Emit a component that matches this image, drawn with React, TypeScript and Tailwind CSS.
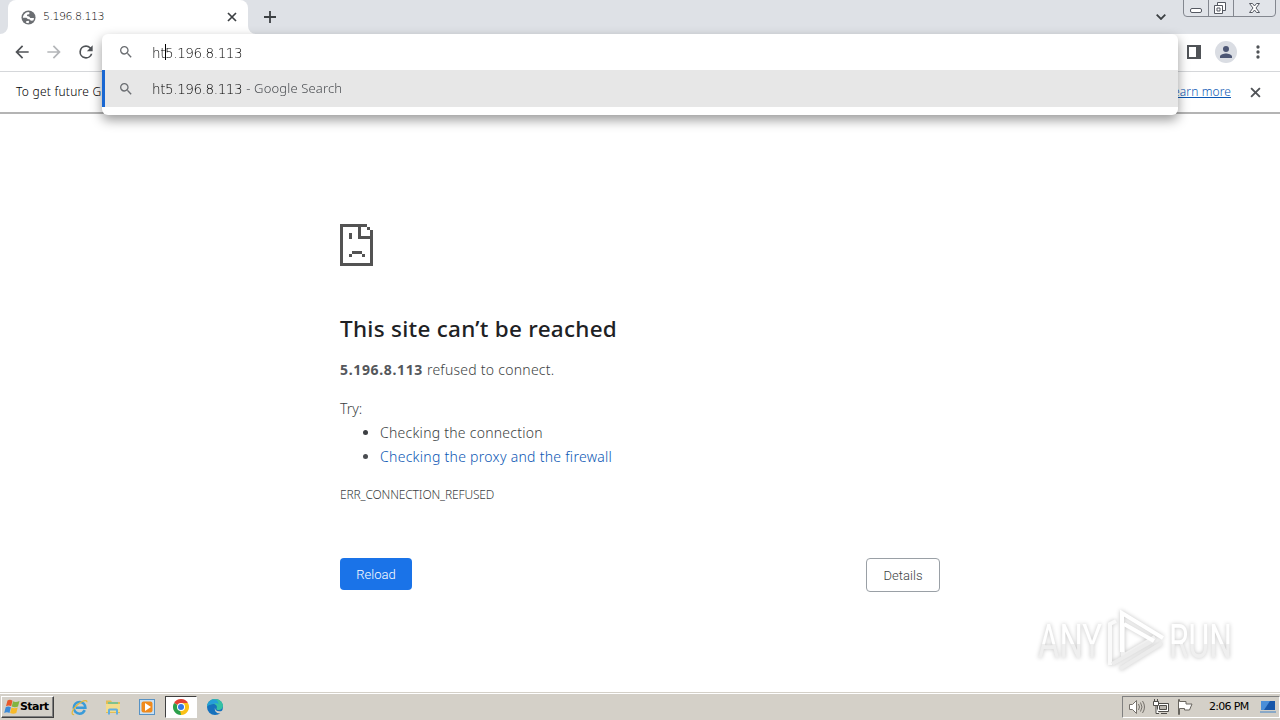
import type { ReactNode } from "react";
import clsx from "clsx";

const SEARCH_PATH =
  "M15.5 14h-.79l-.28-.27A6.47 6.47 0 0 0 16 9.5 6.5 6.5 0 1 0 9.5 16c1.61 0 3.09-.59 4.23-1.57l.27.28v.79l5 4.99L20.49 19l-4.99-5zm-6 0C7.01 14 5 11.99 5 9.5S7.01 5 9.5 5 14 7.01 14 9.5 11.99 14 9.5 14z";

function Icon({ d, className }: { d: string; className?: string }) {
  return (
    <svg viewBox="0 0 24 24" fill="currentColor" className={clsx("shrink-0", className)}>
      <path d={d} />
    </svg>
  );
}

function CloseIcon({ className }: { className?: string }) {
  return (
    <svg viewBox="0 0 10 10" fill="none" stroke="currentColor" strokeWidth="1.7" className={clsx("shrink-0", className)}>
      <path d="M1 1l8 8M9 1L1 9" />
    </svg>
  );
}

function TabStrip() {
  return (
    <div className="flex h-[34px] shrink-0 items-stretch bg-[#dee1e6]">
      <svg viewBox="0 0 8 8" className="size-2 shrink-0 self-end" fill="#fff">
        <path d="M8 0v8H0a8 8 0 0 0 8-8z" />
      </svg>
      <div className="flex w-[240px] items-center rounded-t-lg bg-white pl-[13px] pr-[11px]">
        <svg viewBox="0 0 16 16" className="size-[15px] shrink-0">
          <circle cx="8" cy="8" r="7.5" fill="#6b6e72" />
          <path d="M2 8.200C2.200 5 4.500 2.300 7.800 2l1.400.8-.5 1.600-2 .5-.4 1.600 2.400.4 1.200 1.600H13.800c0 1-.3 2-.8 2.800l-2.500.2-1-1.500-2.300-.4-1.500-1.400z" fill="#fff" />
          <path d="M5.500 12l2.400-.6.8 1.200-.7 1.400c-1 0-2-.3-2.800-.8z" fill="#fff" />
        </svg>
        <span className="ml-[7px] grow pt-px text-[11px] tracking-[-0.500px] text-black font-['DejaVu_Sans',sans-serif] font-extralight">5.196.8.113</span>
        <CloseIcon className="size-[10px] text-[#3c4043]" />
      </div>
      <svg viewBox="0 0 8 8" className="size-2 shrink-0 self-end" fill="#fff">
        <path d="M0 0v8h8a8 8 0 0 1-8-8z" />
      </svg>
      <svg viewBox="0 0 12 12" className="ml-2 size-3 shrink-0 self-center" stroke="#3c4043" strokeWidth="1.8">
        <path d="M6 0v12M0 6h12" />
      </svg>
      <svg viewBox="0 0 10 6" className="ml-auto h-[6px] w-[10px] shrink-0 self-center" fill="none" stroke="#3c4043" strokeWidth="1.8">
        <path d="M.7.7L5 5 9.300.7" />
      </svg>
      <svg viewBox="0 0 97 18" className="ml-[17px] h-[18px] w-[97px] shrink-0" fill="none" stroke="#83878f">
        <path d="M.5-1v14q0 3.500 3.500 3.500h85q3.500 0 3.500-3.500V-1M25.500 0v16M50.500 0v16" fill="#e1e4e9" />
        <rect x="7.500" y="8.500" width="11" height="4" rx="1.500" fill="#fff" stroke="#555962" />
        <path d="M34.500 2.500h8v8h-8z" fill="#fff" stroke="#555962" />
        <path d="M31.500 5.500h8v8h-8zM34 8h3v3h-3z" fill="#fff" stroke="#555962" />
        <path d="M66.500 3.500h3l2 2.500 2-2.500h3L73 8l3.500 4.500h-3l-2-2.500-2 2.500h-3L70 8z" fill="#fff" stroke="#555962" />
      </svg>
    </div>
  );
}

function Toolbar() {
  return (
    <div className="flex h-[38px] shrink-0 items-center border-b border-[#d5d7da] bg-white pb-px px-3">
      <Icon d="M20 11H7.830l5.590-5.590L12 4l-8 8 8 8 1.410-1.410L7.830 13H20v-2z" className="size-5 text-[#505357]" />
      <Icon d="M12 4l-1.410 1.410L16.170 11H4v2h12.170l-5.580 5.590L12 20l8-8z" className="ml-3 size-5 text-[#b4b6b9]" />
      <Icon
        d="M17.650 6.350A7.960 7.960 0 0 0 12 4a8 8 0 1 0 7.730 10h-2.080A6 6 0 1 1 12 6c1.660 0 3.140.69 4.220 1.780L13 11h7V4l-2.350 2.350z"
        className="ml-3 size-5 text-[#505357]"
      />
      <svg viewBox="0 0 14 14" className="ml-auto size-[14px] shrink-0">
        <path d="M0 0h14v14H0zM2 2v10h7V2z" fill="#505357" fillRule="evenodd" />
      </svg>
      <div className="ml-[14px] flex size-[22px] items-center justify-center rounded-full bg-[#dadde3]">
        <Icon d="M12 12a4 4 0 1 0 0-8 4 4 0 0 0 0 8zm0 2c-2.670 0-8 1.340-8 4v2h16v-2c0-2.660-5.330-4-8-4z" className="size-[18px] text-[#4c5674]" />
      </div>
      <Icon
        d="M12 8a2 2 0 1 0 0-4 2 2 0 0 0 0 4zm0 2a2 2 0 1 0 0 4 2 2 0 0 0 0-4zm0 6a2 2 0 1 0 0 4 2 2 0 0 0 0-4z"
        className="ml-[11px] size-5 text-[#505357]"
      />
    </div>
  );
}

function InfoBar() {
  return (
    <div className="flex h-[42px] shrink-0 items-center border-b-2 border-[#b4b4b4] bg-white pl-4 pr-[19px] text-[12px] font-['Noto_Sans',sans-serif] font-light">
      <span className="whitespace-nowrap tracking-[0.250px] text-black">To get future G</span>
      <span className="ml-auto whitespace-nowrap text-[#0b57b4] tracking-[0.100px] underline">Learn more</span>
      <CloseIcon className="ml-[19px] size-[11px] text-[#505357]" />
    </div>
  );
}

function OmniboxPopup() {
  return (
    <div className="absolute left-[102px] top-[34px] flex h-[81px] w-[1076px] flex-col overflow-hidden rounded-[6px] bg-white text-[13.500px] tracking-[-0.400px] text-black font-['DejaVu_Sans',sans-serif] font-extralight">
      <div className="flex h-9 items-center pl-[16px]">
        <Icon d={SEARCH_PATH} className="size-4 text-[#6b6e72]" />
        <span className="ml-[18px] pt-0.5">ht</span>
        <span className="-mr-px h-4 w-px bg-black" />
        <span className="pt-0.5">5.196.8.113</span>
      </div>
      <div className="flex h-[37px] items-center border-l-[3px] border-[#1967d2] bg-[#e7e7e7] pl-[13px]">
        <Icon d={SEARCH_PATH} className="size-4 text-[#6b6e72]" />
        <span className="ml-[18px] pt-px">ht5.196.8.113</span>
        <span className="ml-1 text-[13px] tracking-[0.150px] text-[#4a4d51] font-['Noto_Sans',sans-serif] font-light">- Google Search</span>
      </div>
    </div>
  );
}

function SadPage() {
  return (
    <svg viewBox="0 0 33 42" className="h-[42px] w-[33px]" fill="#535353" shapeRendering="crispEdges">
      <path d="M0 0h27v3h-6v9h9V6h3v36H0zM3 3v36h27V15H18V3z" fillRule="evenodd" />
      <path d="M27 3h3v3h-3zM9 9h3v6H9zM12 27h10v3H12zM9 30h3v3H9zM22 30h3v3h-3z" />
    </svg>
  );
}

function ErrorPage() {
  return (
    <main className="flex grow flex-col items-center bg-white pt-[110px]">
      <div className="flex w-[600px] flex-col text-[14px] font-light leading-6 tracking-[0.250px] text-[#3c3f43] font-['Noto_Sans',sans-serif]">
        <SadPage />
        <h1 className="mt-[48px] whitespace-nowrap text-[22.500px] font-medium leading-[30px] tracking-[0.270px] text-[#202124]">
          This site can’t be reached
        </h1>
        <p className="mt-[14px]">
          <strong className="font-bold tracking-[0.650px] text-[#54575b]">5.196.8.113</strong> refused to connect.
        </p>
        <p className="mt-[15px] tracking-normal">Try:</p>
        <ul className="list-disc pl-10">
          <li>Checking the connection</li>
          <li className="marker:text-[#4a4d51] text-[#0b57b4] tracking-[0.280px]">Checking the proxy and the firewall</li>
        </ul>
        <p className="mt-[14px] text-[12px] tracking-[-0.150px]">ERR_CONNECTION_REFUSED</p>
        <div className="mt-[51px] flex items-start justify-between text-[13px] tracking-[0.050px] font-['Roboto',sans-serif]">
          <button className="h-8 w-[72px] rounded bg-[#1a73e8] pt-px text-white">Reload</button>
          <button className="h-[34px] w-[74px] rounded border border-[#9aa0a6] pt-px">Details</button>
        </div>
      </div>
    </main>
  );
}

function Watermark() {
  return (
    <svg viewBox="0 0 196 66" className="absolute left-[1038px] top-[608px] h-[66px] w-[196px] drop-shadow-[0_0_2px_#c4c4c4]">
      <defs>
        <linearGradient id="mark" x1="0" y1="0" x2="0" y2="1">
          <stop offset="0.55" stopColor="#fff" />
          <stop offset="0.55" stopColor="#efefef" />
        </linearGradient>
      </defs>
      <g fill="url(#mark)" fontFamily="Roboto, sans-serif" fontSize="49">
        <text x="0" y="50" textLength="64" lengthAdjust="spacingAndGlyphs">
          ANY
        </text>
        <text x="131" y="50" textLength="63" lengthAdjust="spacingAndGlyphs">
          RUN
        </text>
      </g>
      <g fill="none" strokeWidth="4">
        <path d="M72 57V16l6-3" stroke="#fafafa" />
        <path d="M85 15v33l32-19" stroke="#f0f0f0" />
        <path d="M74 56l40-23M82 61l42-26" stroke="#ececec" />
        <path d="M84 44V5l41 25M86 16l30 17" stroke="#fff" />
      </g>
    </svg>
  );
}

function TaskSlot({ active, children }: { active?: boolean; children: ReactNode }) {
  return (
    <div
      className={clsx(
        "flex h-[22px] w-8 items-center justify-center",
        active && "border border-t-[#404040] border-l-[#404040] border-r-white border-b-white bg-white"
      )}
    >
      {children}
    </div>
  );
}

function WindowsFlag() {
  return (
    <svg viewBox="0 0 16 16" className="size-4 shrink-0">
      <path d="M3.500 1.500q2.500-1.500 5 .3L7.200 7.300q-2.500-1.500-5.200 0z" fill="#e8582a" />
      <path d="M9 2.200q2.500 1.500 6.500-.3L14 7.500q-3 1.500-6.200 0z" fill="#82b440" />
      <path d="M1.700 8.300q2.500-1.500 5.200 0L5.500 14q-2.500-1.500-5.300 0z" fill="#3b8ad8" />
      <path d="M7.500 8.500q2.900 1.500 6.200 0L12.300 14q-3 1.500-6.200 0z" fill="#f7b928" />
    </svg>
  );
}

function ExplorerIcon() {
  return (
    <svg viewBox="0 0 16 16" className="size-[17px]" fill="none">
      <path d="M13 10.500c-1 2-2.600 3.300-5 3.300a5.500 5.500 0 1 1 5.600-5.600H4.500" stroke="#3a9bd9" strokeWidth="2.300" />
      <path d="M3 14.800C-.5 15 1 10 5.500 5.800S15 0 15 3" stroke="#e5b93c" strokeWidth="1.200" />
    </svg>
  );
}

function FolderIcon() {
  return (
    <svg viewBox="0 0 16 16" className="size-4">
      <path d="M1 1.500h5l1 1.500h8V14H1z" fill="#e3bd55" />
      <path d="M3 3h10v5H3z" fill="#7fc18d" />
      <path d="M1 5h14v8H1z" fill="#f3dc8c" />
      <path d="M3 15.500V11q0-1.500 1.500-1.500h7q1.500 0 1.500 1.500v4.500h-2V11.500H5v4z" fill="#62aee0" />
    </svg>
  );
}

function MediaIcon() {
  return (
    <svg viewBox="0 0 16 16" className="size-4">
      <rect x=".5" y=".5" width="15" height="15" fill="#c9e0f3" stroke="#5792c4" />
      <rect x="2.500" y="2.500" width="11" height="11" rx="2" fill="#f08a1c" />
      <path d="M6 4v8l6-4z" fill="#fff" />
    </svg>
  );
}

function ChromeIcon() {
  return (
    <svg viewBox="0 0 16 16" className="size-4">
      <path d="M8 8L1.070 4A8 8 0 0 1 14.930 4z" fill="#e34133" />
      <path d="M8 8l6.930-4A8 8 0 0 1 8 16z" fill="#fbc116" />
      <path d="M8 8v8A8 8 0 0 1 1.070 4z" fill="#2ca04b" />
      <path d="M8 4h6.930L11.500 10 8 16l-1-5z" fill="#fbc116" />
      <circle cx="8" cy="8" r="4" fill="#fff" />
      <circle cx="8" cy="8" r="3" fill="#3478e5" />
    </svg>
  );
}

function EdgeIcon() {
  return (
    <svg viewBox="0 0 16 16" className="size-4">
      <circle cx="8" cy="8" r="8" fill="#1671bd" />
      <path d="M0 7.500C.5 3 4 0 8 0c5 0 8 3.600 8 6.800C16 9.300 14 11 11.800 11c-1.700 0-2.600-.7-2.300-1.300C10.800 7.500 9 5 6.300 5 3.500 5 1 6.200 0 7.500z" fill="#35c1a4" />
      <path d="M0 7.500C.5 3.500 3.500.6 7 .6c2.600 0 4.500 2 4.500 4.900C10 3.700 8 4 6.300 5 3.500 5 1 6.200 0 7.500z" fill="#259fd8" />
      <path d="M8 8.500c-.3 2.200 1.600 4 4.600 3.800 1 0 2-.3 2.900-.9L16 13l-2.500 1.200c-3.500.8-6.500-2-5.500-5.700z" fill="#d5d0c8" />
    </svg>
  );
}

function Tray() {
  return (
    <div className="ml-auto flex h-[22px] w-[158px] items-center border border-t-[#808080] border-l-[#808080] border-b-white border-r-white pl-[6px]">
      <svg viewBox="0 0 16 16" className="size-4 shrink-0" fill="none" stroke="#75716b">
        <path d="M.5 5.500h3L7.500 1.500v13l-4-4h-3z" fill="#fff" />
        <path d="M9.500 5q2 3 0 6M11.500 3.500q3 4.500 0 9M13.500 2q4 6 0 12" />
      </svg>
      <svg viewBox="0 0 16 16" className="ml-2 size-4 shrink-0" fill="none" stroke="#4f4d49">
        <path d="M4.500 4.500h11v8h-11z" fill="#fff" />
        <path d="M6.500 6.500h7v4h-7z" fill="#b9b5ae" />
        <path d="M8 14.500h6" />
        <path d="M.5 2.500h5v4h-5zM1.500 0v2.500M4.500 0v2.500M3 7v7.500h3" fill="#fff" />
      </svg>
      <svg viewBox="0 0 16 16" className="ml-2 size-4 shrink-0" fill="#fff" stroke="#68655f">
        <path d="M1.500.5v15h1V9.500h5v1.500h5l2.500-6H9V2.500H2.500v-2z" />
      </svg>
      <span className="ml-4 w-[42px] whitespace-nowrap pt-px text-[11px] tracking-[-0.700px] text-black font-['DejaVu_Sans',sans-serif]">2:06 PM</span>
      <svg viewBox="0 0 16 14" className="ml-[9px] h-[14px] w-4 shrink-0">
        <path d="M1 1h14v9H1z" fill="#1756a9" />
        <path d="M1 1h9L4 10H1z" fill="#4a8ed8" />
        <path d="M0 11h16v2H0z" fill="#8aa9c7" />
      </svg>
    </div>
  );
}

function Taskbar() {
  return (
    <footer className="flex h-[28px] shrink-0 items-center border-t border-[#d4d0c8] bg-[#d4d0c8] pt-px shadow-[inset_0_1px_0_#ffffff]">
      <button className="ml-px flex h-[22px] w-[53px] items-center border border-t-white border-l-white border-b-[#404040] border-r-[#404040] pl-[2px] text-[11px] font-bold tracking-[-0.550px] text-black shadow-[inset_-1px_-1px_0_#808080] font-['DejaVu_Sans',sans-serif]">
        <WindowsFlag />
        <span className="pt-px">Start</span>
      </button>
      <div className="ml-[9px] flex gap-[2px]">
        <TaskSlot>
          <ExplorerIcon />
        </TaskSlot>
        <TaskSlot>
          <FolderIcon />
        </TaskSlot>
        <TaskSlot>
          <MediaIcon />
        </TaskSlot>
        <TaskSlot active>
          <ChromeIcon />
        </TaskSlot>
        <TaskSlot>
          <EdgeIcon />
        </TaskSlot>
      </div>
      <Tray />
    </footer>
  );
}

export default function App() {
  return (
    <div className="relative flex h-[720px] w-[1280px] flex-col overflow-hidden bg-white">
      <TabStrip />
      <Toolbar />
      <InfoBar />
      <ErrorPage />
      <Taskbar />
      {/* the filter makes this a containing block, so it has to span the window */}
      <div className="pointer-events-none absolute inset-0 drop-shadow-[0_5px_6px_#00000066]">
        <OmniboxPopup />
      </div>
      <Watermark />
    </div>
  );
}
